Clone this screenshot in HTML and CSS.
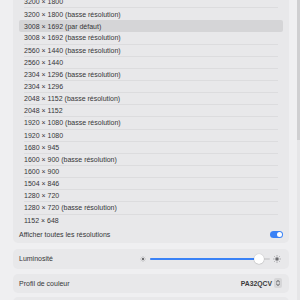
FILE: index.html
```html
<!DOCTYPE html>
<html lang="fr">
<head>
    <meta charset="UTF-8">
    <meta name="viewport" content="width=device-width, initial-scale=1.0">
    <title>Moniteurs</title>
    <link rel="stylesheet" href="styles.css">
</head>
<body>
    <div class="pane">
        <div class="content">
            <section class="card">
                <ul class="res-list">
                    <li class="res"><span>3200 × 1800</span></li>
                    <li class="res before-selected"><span>3200 × 1800 (basse résolution)</span></li>
                    <li class="res selected"><span>3008 × 1692 (par défaut)</span></li>
                    <li class="res"><span>3008 × 1692 (basse résolution)</span></li>
                    <li class="res"><span>2560 × 1440 (basse résolution)</span></li>
                    <li class="res"><span>2560 × 1440</span></li>
                    <li class="res"><span>2304 × 1296 (basse résolution)</span></li>
                    <li class="res"><span>2304 × 1296</span></li>
                    <li class="res"><span>2048 × 1152 (basse résolution)</span></li>
                    <li class="res"><span>2048 × 1152</span></li>
                    <li class="res"><span>1920 × 1080 (basse résolution)</span></li>
                    <li class="res"><span>1920 × 1080</span></li>
                    <li class="res"><span>1680 × 945</span></li>
                    <li class="res"><span>1600 × 900 (basse résolution)</span></li>
                    <li class="res"><span>1600 × 900</span></li>
                    <li class="res"><span>1504 × 846</span></li>
                    <li class="res"><span>1280 × 720</span></li>
                    <li class="res"><span>1280 × 720 (basse résolution)</span></li>
                    <li class="res last"><span>1152 × 648</span></li>
                </ul>
                <div class="setting-row show-all">
                    <span class="label">Afficher toutes les résolutions</span>
                    <span class="toggle on"><span class="knob"></span></span>
                </div>
            </section>

            <section class="card setting-row brightness">
                <span class="label">Luminosité</span>
                <div class="slider-group">
                    <svg class="sun small" viewBox="0 0 12 12">
                        <circle cx="6" cy="6" r="2.4" fill="#6b6b6e"/>
                        <g stroke="#9a9a9d" stroke-width="1" stroke-linecap="round">
                            <line x1="6" y1="0.8" x2="6" y2="1.8"/>
                            <line x1="6" y1="10.2" x2="6" y2="11.2"/>
                            <line x1="0.8" y1="6" x2="1.8" y2="6"/>
                            <line x1="10.2" y1="6" x2="11.2" y2="6"/>
                            <line x1="2.3" y1="2.3" x2="3" y2="3"/>
                            <line x1="9" y1="9" x2="9.7" y2="9.7"/>
                            <line x1="2.3" y1="9.7" x2="3" y2="9"/>
                            <line x1="9" y1="3" x2="9.7" y2="2.3"/>
                        </g>
                    </svg>
                    <div class="track">
                        <div class="fill" style="width: 91%"></div>
                        <span class="thumb" style="left: 91%"></span>
                    </div>
                    <svg class="sun large" viewBox="0 0 12 12">
                        <circle cx="6" cy="6" r="2.6" fill="#6b6b6e"/>
                        <g stroke="#8e8e91" stroke-width="1" stroke-linecap="round">
                            <line x1="6" y1="0.6" x2="6" y2="1.8"/>
                            <line x1="6" y1="10.2" x2="6" y2="11.4"/>
                            <line x1="0.6" y1="6" x2="1.8" y2="6"/>
                            <line x1="10.2" y1="6" x2="11.4" y2="6"/>
                            <line x1="2.2" y1="2.2" x2="3" y2="3"/>
                            <line x1="9" y1="9" x2="9.8" y2="9.8"/>
                            <line x1="2.2" y1="9.8" x2="3" y2="9"/>
                            <line x1="9" y1="3" x2="9.8" y2="2.2"/>
                        </g>
                    </svg>
                </div>
            </section>

            <section class="card setting-row profile">
                <span class="label">Profil de couleur</span>
                <div class="popup">
                    <span class="value">PA32QCV</span>
                    <svg class="stepper" viewBox="0 0 8 10">
                        <rect x="0" y="0" width="8" height="10" rx="2" fill="#d6d6d8"/>
                        <path d="M2.4 4 L4 2.5 L5.6 4 M2.4 6 L4 7.5 L5.6 6" fill="none" stroke="#4a4a4d" stroke-width="0.9" stroke-linecap="round" stroke-linejoin="round"/>
                    </svg>
                </div>
            </section>

            <section class="card empty"></section>
        </div>
        <div class="scrollbar"><div class="scroll-thumb"></div></div>
    </div>
</body>
</html>
```

FILE: styles.css
```css
body {
    margin: 0;
    padding: 0;
    font-family: 'Liberation Sans', Arial, sans-serif;
    font-size: 7px;
    color: #363638;
    background: #efeff1;
    height: 300px;
    overflow: hidden;
}
.pane {
    display: flex;
    height: 300px;
}
.content {
    width: 276px;
    margin-top: -4px;
    padding-left: 13px;
}
.card {
    background: #e8e8ea;
    border-radius: 5px;
}
.res-list {
    list-style: none;
    margin: 0 6px;
    padding: 0;
}
.res {
    height: 12.15px;
    padding: 0 5px;
    border-radius: 2px;
}
.res span {
    display: flex;
    align-items: center;
    height: 100%;
    box-sizing: border-box;
    border-bottom: 1px solid #dcdcde;
}
.res.selected {
    background: #d5d5d7;
}
.res.selected span,
.res.before-selected span,
.res.last span {
    border-bottom: none;
}
.setting-row {
    display: flex;
    align-items: center;
    justify-content: space-between;
    padding: 0 6px;
}
.show-all {
    height: 16.2px;
}
.toggle {
    display: flex;
    align-items: center;
    justify-content: flex-end;
    width: 13px;
    height: 7px;
    padding: 0 1px;
    box-sizing: border-box;
    border-radius: 4px;
    background: #3a82f6;
}
.toggle .knob {
    width: 5px;
    height: 5px;
    border-radius: 50%;
    background: #fff;
}
.brightness {
    margin-top: 6px;
    height: 20px;
    padding-right: 8px;
}
.slider-group {
    display: flex;
    align-items: center;
}
.sun.small {
    width: 6px;
    height: 6px;
}
.sun.large {
    width: 8px;
    height: 8px;
    margin-left: 3px;
}
.track {
    position: relative;
    width: 120px;
    height: 2px;
    margin-left: 4px;
    border-radius: 1px;
    background: #d2d2d4;
}
.track .fill {
    height: 100%;
    border-radius: 1px;
    background: #3a82f6;
}
.track .thumb {
    position: absolute;
    top: -4px;
    width: 10px;
    height: 10px;
    margin-left: -5px;
    border-radius: 50%;
    background: #fff;
    box-shadow: 0 0 1px rgba(0, 0, 0, 0.25), 0 0.5px 1px rgba(0, 0, 0, 0.15);
}
.profile {
    margin-top: 5px;
    height: 19px;
    padding-right: 7px;
}
.popup {
    display: flex;
    align-items: center;
    gap: 2px;
}
.popup .value {
    font-weight: bold;
    font-size: 6.8px;
    color: #3a3a3c;
}
.stepper {
    width: 8px;
    height: 10px;
}
.card.empty {
    margin-top: 4px;
    height: 30px;
}
.scrollbar {
    margin-left: 8px;
    width: 3px;
    background: #e6e6e8;
}
.scroll-thumb {
    height: 140px;
    background: #cfcfd1;
}
```
